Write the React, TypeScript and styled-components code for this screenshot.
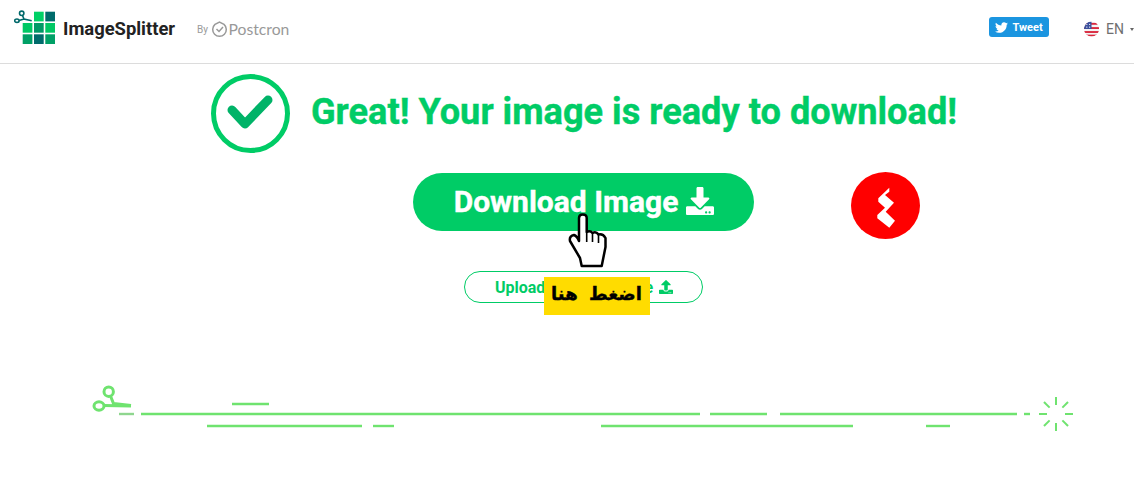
import * as React from "react"
import styled, { createGlobalStyle } from 'styled-components'
import { FaDownload, FaTwitter, FaUpload } from 'react-icons/fa'

const GREEN = '#00cc66'
const CUT = '#6fe36f'

const GlobalStyle = createGlobalStyle`
  html, body {
    margin: 0;
    background: #fff;
    overflow: hidden;
  }
  body {
    font-family: Roboto, "Liberation Sans", sans-serif;
  }
`

const Page = styled('div')`
  width: 1134px;
  height: 492px;
  overflow: hidden;
`

const Header = styled('header')`
  height: 64px;
  box-sizing: border-box;
  border-bottom: 1px solid #dcdcdc;
  display: flex;
  align-items: center;
  justify-content: space-between;
  padding: 0 0 9px 14px;
`

const Brand = styled('div')`
  display: flex;
  align-items: center;
`

const BrandName = styled('span')`
  font-size: 18.4px;
  font-weight: 700;
  color: #222;
  margin-left: 7px;
  margin-top: 2px;
`

const ByLine = styled('span')`
  display: flex;
  align-items: center;
  margin-left: 22px;
  margin-top: 4px;
  color: #9a9a9a;
  font-size: 10px;
`

const PostcronName = styled('span')`
  font-family: Lato, sans-serif;
  font-size: 15.7px;
  margin-left: 1px;
  color: #999;
`

const HeaderRight = styled('div')`
  display: flex;
  align-items: center;
`

const TweetButton = styled('a')`
  width: 60px;
  height: 20px;
  background: #1b95e0;
  border-radius: 3px;
  color: #fff;
  font-size: 11px;
  font-weight: 700;
  display: flex;
  align-items: center;
  justify-content: center;
  gap: 4px;
`

const Lang = styled('div')`
  display: flex;
  align-items: center;
  margin-left: 35px;
  margin-top: 4px;
  color: #6f6f6f;
  font-size: 14px;
  gap: 7px;
  width: 50px;
`

const Caret = styled('span')`
  width: 0;
  height: 0;
  border-left: 2.5px solid transparent;
  border-right: 2.5px solid transparent;
  border-top: 3px solid #666;
  margin-left: -1px;
`

const Main = styled('main')`
  display: flex;
  flex-direction: column;
  align-items: center;
  padding: 10px 0 0 32px;
`

const Headline = styled('div')`
  display: flex;
  align-items: center;
  gap: 21px;
  height: 79px;
  margin-left: 2px;
`

const HeadlineText = styled('h1')`
  margin: 0 0 5px;
  color: ${GREEN};
  font-size: 36.2px;
  font-weight: 700;
  -webkit-text-stroke: 0.4px ${GREEN};
  white-space: nowrap;
`

const Actions = styled('div')`
  position: relative;
  width: 341px;
  display: flex;
  flex-direction: column;
  align-items: center;
  margin-top: 20px;
`

const DownloadButton = styled('a')`
  width: 341px;
  height: 58px;
  box-sizing: border-box;
  padding: 0 0 2px 2px;
  border-radius: 29px;
  background: ${GREEN};
  color: #fff;
  font-size: 30px;
  font-weight: 700;
  -webkit-text-stroke: 0.4px #fff;
  display: flex;
  align-items: center;
  justify-content: center;
  gap: 8px;
`

const UploadButton = styled('a')`
  width: 239px;
  height: 32px;
  box-sizing: border-box;
  padding-left: 2px;
  margin-top: 40px;
  border: 1px solid ${GREEN};
  border-radius: 16px;
  color: ${GREEN};
  font-size: 16px;
  font-weight: 700;
  display: flex;
  align-items: center;
  justify-content: center;
  gap: 6px;
`

const HandCursor = styled('svg')`
  position: absolute;
  left: 155px;
  top: 39px;
`

const Sticker = styled('div')`
  position: absolute;
  left: 131px;
  top: 104px;
  width: 106px;
  height: 38px;
  box-sizing: border-box;
  padding-bottom: 5px;
  background: #ffdc00;
  color: #000;
  font-family: "DejaVu Sans", sans-serif;
  font-size: 18px;
  font-weight: 700;
  -webkit-text-stroke: 0.4px #000;
  display: flex;
  align-items: center;
  justify-content: center;
  word-spacing: 5px;
`

const RedBadge = styled('svg')`
  position: absolute;
  left: 438px;
  top: -1px;
`

const CutLine = styled('svg')`
  display: block;
  align-self: flex-start;
  margin: 77px 0 0 -32px;
`

const Dash = ({ x1, x2, y, color = CUT }: { x1: number; x2: number; y: number; color?: string }) => (
  <line x1={x1} x2={x2} y1={y} y2={y} stroke={color} strokeWidth="2.4" />
)

const rays = [0, 45, 90, 135, 180, 225, 270, 315]

const Logo = () => (
  <svg width="42" height="34" viewBox="0 0 42 34">
    <g transform="translate(8.7 1.7)">
      <rect x="11.3" y="0" width="9.7" height="9.7" fill="#00d166" />
      <rect x="22.6" y="0" width="9.7" height="9.7" fill="#006b6b" />
      <rect x="0" y="11.3" width="9.7" height="9.7" fill="#00c864" />
      <rect x="11.3" y="11.3" width="9.7" height="9.7" fill="#009966" />
      <rect x="22.6" y="11.3" width="9.7" height="9.7" fill="#00c864" />
      <rect x="0" y="22.6" width="9.7" height="9.7" fill="#00a066" />
      <rect x="11.3" y="22.6" width="9.7" height="9.7" fill="#006b6b" />
      <rect x="22.6" y="22.6" width="9.7" height="9.7" fill="#00a066" />
    </g>
    <g fill="none" stroke="#00686a" strokeWidth="1.6">
      <circle cx="7.7" cy="3.3" r="2.2" />
      <ellipse cx="2.9" cy="10.7" rx="2.2" ry="1.7" />
      <path d="M8.5 5.5 L10 9 L17.7 10.7 M5 10.5 L10 9" />
    </g>
  </svg>
)

const PostcronMark = () => (
  <svg width="17" height="17" viewBox="0 0 17 17" fill="none" stroke="#999" strokeWidth="1.5">
    <path d="M4 3.4 A6.8 6.8 0 1 0 13 3.4 L8.5 1.2 Z" />
    <path d="M5.5 8 L8 10.5 L12 6" />
  </svg>
)

const Flag = () => (
  <svg width="16" height="16" viewBox="0 0 16 16">
    <defs>
      <clipPath id="flag-round">
        <circle cx="8" cy="8" r="8" />
      </clipPath>
    </defs>
    <g clipPath="url(#flag-round)">
      <rect width="16" height="16" fill="#f4f4f4" />
      <rect y="1.5" width="16" height="2" fill="#d9263c" />
      <rect y="6" width="16" height="2" fill="#d9263c" />
      <rect y="10.2" width="16" height="2" fill="#d9263c" />
      <rect y="14" width="16" height="2" fill="#d9263c" />
      <rect width="8" height="8" fill="#3a4f9c" />
      <circle cx="3" cy="3" r=".7" fill="#fff" />
      <circle cx="6" cy="3" r=".7" fill="#fff" />
      <circle cx="3" cy="6" r=".7" fill="#fff" />
      <circle cx="6" cy="6" r=".7" fill="#fff" />
    </g>
  </svg>
)

const App: React.FC = () => {
  return (
    <Page>
      <GlobalStyle />
      <Header>
        <Brand>
          <Logo />
          <BrandName>ImageSplitter</BrandName>
          <ByLine>
            By&nbsp;<PostcronMark /><PostcronName>Postcron</PostcronName>
          </ByLine>
        </Brand>
        <HeaderRight>
          <TweetButton><FaTwitter size={13} />Tweet</TweetButton>
          <Lang><Flag />EN<Caret /></Lang>
        </HeaderRight>
      </Header>
      <Main>
        <Headline>
          <svg width="79" height="79" viewBox="0 0 79 79">
            <circle cx="39.5" cy="39.5" r="37" fill="none" stroke={GREEN} strokeWidth="5" />
            <path d="M21 36 L34 50 L57 26" fill="none" stroke="#00b368" strokeWidth="9" strokeLinecap="round" strokeLinejoin="round" />
          </svg>
          <HeadlineText>Great! Your image is ready to download!</HeadlineText>
        </Headline>
        <Actions>
          <DownloadButton>Download Image <FaDownload size={28} /></DownloadButton>
          <UploadButton>Upload another image <FaUpload size={14} /></UploadButton>
          <HandCursor width="40" height="58" viewBox="0 0 40 58">
            <path
              d="M11 6 Q11 2.5 14.8 2.5 Q18.7 2.5 18.7 6 L18.7 20 Q22 18 24.5 21 Q28 19 30.5 22.5 Q35 21.5 37.5 26 L37.5 35 L33.7 54 L13.7 54 L12 46 L2 29 Q1 24 6 23 Q9 24 11 29 Z"
              fill="#fff"
              stroke="#000"
              strokeWidth="2.5"
              strokeLinejoin="round"
            />
            <path d="M24.5 21 L24.5 30 M30.5 22.5 L30.5 31 M18.7 20 L18.7 30" fill="none" stroke="#000" strokeWidth="1.6" />
          </HandCursor>
          <Sticker>اضغط هنا</Sticker>
          <RedBadge width="69" height="67" viewBox="0 0 69 67">
            <ellipse cx="34.5" cy="33.5" rx="34.5" ry="33.5" fill="#ff0000" />
            <path d="M38.3 15.7 L27.3 26.3 L27.3 29.7 L34 35.7 L26.3 43 L26.3 46.3 L38.3 55.7 L44 48.7 L34.7 39.7 L43 30.7 L34 23 L38.3 19.7 Z" fill="#fff" />
          </RedBadge>
        </Actions>
        <CutLine width="1134" height="60" viewBox="0 380 1134 60">
          <g fill="none" stroke={CUT} strokeWidth="3">
            <circle cx="108.7" cy="391.7" r="4.7" />
            <ellipse cx="99" cy="406" rx="5" ry="4.2" />
            <path d="M110.5 396 L113.5 403.5 L131 405.5 M104 405.5 L131 406" />
          </g>
          <Dash x1={119} x2={134} y={414} color="#8fd68f" />
          <Dash x1={141} x2={700} y={414} />
          <Dash x1={710} x2={767} y={414} />
          <Dash x1={780} x2={1017} y={414} />
          <Dash x1={1024} x2={1030} y={414} />
          <Dash x1={232} x2={269} y={404} />
          <Dash x1={207} x2={362} y={426} />
          <Dash x1={373} x2={394} y={426} />
          <Dash x1={601} x2={853} y={426} />
          <Dash x1={926} x2={950} y={426} />
          {rays.map(angle => (
            <line
              key={angle}
              x1={1056 + 9}
              x2={1056 + 17}
              y1={414}
              y2={414}
              stroke={CUT}
              strokeWidth="2"
              transform={`rotate(${angle} 1056 414)`}
            />
          ))}
        </CutLine>
      </Main>
    </Page>
  )
}

export default App
